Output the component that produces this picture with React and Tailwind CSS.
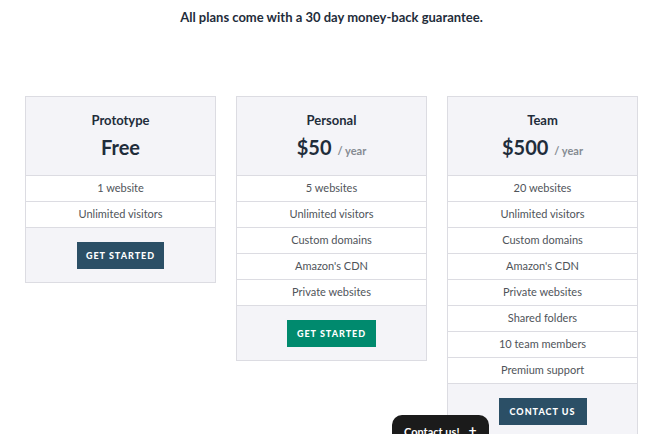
import React from "react";

const plans = [
  { name: "Prototype", price: "Free", per: false, features: ["1 website", "Unlimited visitors"], btn: "GET STARTED", btnClass: "bg-[#2b4f66] w-[87px]" },
  { name: "Personal", price: "$50", per: true, features: ["5 websites", "Unlimited visitors", "Custom domains", "Amazon's CDN", "Private websites"], btnClass: "bg-[#008a6e] w-[89px]", btn: "GET STARTED" },
  { name: "Team", price: "$500", per: true, features: ["20 websites", "Unlimited visitors", "Custom domains", "Amazon's CDN", "Private websites", "Shared folders", "10 team members", "Premium support"], btnClass: "bg-[#2b4f66] w-[88px]", btn: "CONTACT US" },
];

function Card({ p }) {
  return (
    <div className="w-[191px] border border-[#dcdce2] bg-white">
      <div className="bg-[#f4f4f8] h-[78px] flex flex-col items-center pt-[14px]">
        <div className="text-[13px] font-bold text-[#1f2d3b] leading-[18px]">{p.name}</div>
        <div className="flex items-baseline mt-[5px]">
          <span className="text-[20px] font-bold text-[#1f2d3b] leading-[26px]">{p.price}</span>
          {p.per && <span className="text-[11px] font-bold text-[#858b92] ml-[6px]">/ year</span>}
        </div>
      </div>
      {p.features.map((f) => (
        <div key={f} className="h-[26px] border-t border-[#dcdce2] flex items-center justify-center text-[11px] text-[#4f545a]">
          {f}
        </div>
      ))}
      <div className="bg-[#f4f4f8] border-t border-[#dcdce2] h-[55px] flex items-start justify-center pt-[14px]">
        <div className={`${p.btnClass} h-[27px] flex items-center justify-center text-white text-[9px] font-black tracking-[1px]`}>
          {p.btn}
        </div>
      </div>
    </div>
  );
}

export default function App() {
  return (
    <div className="relative bg-white min-h-[434px] overflow-hidden" style={{ fontFamily: "Lato, 'Open Sans', sans-serif" }}>
      <div className="text-center pt-[9px] text-[13px] font-bold text-[#1f2d3b] leading-[16px]">
        All plans come with a 30 day money-back guarantee.
      </div>
      <div className="flex justify-center gap-[20px] items-start mt-[71px]">
        {plans.map((p) => (
          <Card key={p.name} p={p} />
        ))}
      </div>
      <div className="fixed left-[392px] top-[415px] w-[97px] h-[30px] rounded-t-[10px] bg-[#1b1b1b] flex items-start pt-[9px] pl-[12px] text-white text-[11px] font-bold">
        <span>Contact us!</span>
        <span className="ml-[9px] text-[14px] leading-[12px] font-bold">+</span>
      </div>
    </div>
  );
}
